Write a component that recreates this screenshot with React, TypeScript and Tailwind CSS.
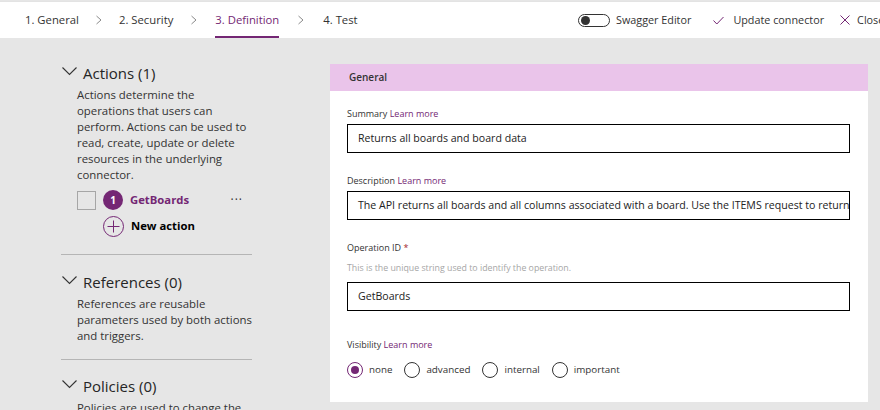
import React from "react";

const font = { fontFamily: '"Open Sans", "Noto Sans", sans-serif' };

function Chevron() {
  return (
    <svg width="6" height="10" viewBox="0 0 6 10" className="text-[#8a8a8a]">
      <path d="M0.5 1 L5 5 L0.5 9" fill="none" stroke="currentColor" strokeWidth="1" />
    </svg>
  );
}

function Down() {
  return (
    <svg width="15" height="9" viewBox="0 0 15 9" className="text-[#333]">
      <path d="M0.5 0.5 L7.5 7.5 L14.5 0.5" fill="none" stroke="currentColor" strokeWidth="1.1" />
    </svg>
  );
}

function Section({ title, children, last }: { title: string; children: React.ReactNode; last?: boolean }) {
  return (
    <div className={last ? "" : "border-b border-[#b5b5b5]"}>
      <div className="flex items-center h-[20px]">
        <span className="ml-[1px] mr-[6px] mt-[-4px]"><Down /></span>
        <span className="text-[15px] text-[#252525] leading-[20px]">{title}</span>
      </div>
      <div className="pl-[16px]">{children}</div>
    </div>
  );
}

function Label({ text, link, star }: { text: string; link?: boolean; star?: boolean }) {
  return (
    <div className="text-[9px] leading-[14px] text-[#333]">
      {text}
      {link && <span className="text-[#742774]"> Learn more</span>}
      {star && <span className="text-[#a4262c]"> *</span>}
    </div>
  );
}

function Input({ value }: { value: string }) {
  return (
    <div className="h-[29px] border-[1.5px] border-black flex items-center px-[10px] overflow-hidden whitespace-nowrap text-[10.6px] text-[#222]">
      {value}
    </div>
  );
}

function Radio({ label, checked }: { label: string; checked?: boolean }) {
  return (
    <div className="flex items-center gap-[6px]">
      <div className={`w-[16px] h-[16px] rounded-full border ${checked ? "border-[#742774]" : "border-[#333]"} flex items-center justify-center`}>
        {checked && <div className="w-[8px] h-[8px] rounded-full bg-[#742774]" />}
      </div>
      <span className="text-[9.8px] text-[#333]">{label}</span>
    </div>
  );
}

const desc = "text-[11.4px] leading-[16px] text-[#333] mt-[4px] whitespace-nowrap";

export default function App() {
  return (
    <div style={font} className="w-[880px] h-[410px] overflow-hidden bg-[#e6e6e6] flex flex-col">
      {/* top bar */}
      <div className="h-[37px] bg-white border-t border-[#e3e3e3] mt-[1px] flex items-stretch text-[#333] shrink-0">
        <div className="flex items-center pl-[25px] text-[11.3px]">
          <span>1. General</span>
          <span className="mx-[17px] flex"><Chevron /></span>
          <span>2. Security</span>
          <span className="mx-[18px] flex"><Chevron /></span>
          <div className="relative h-full flex items-center text-[#742774]">
            <span>3. Definition</span>
            <div className="absolute left-0 right-0 bottom-0 h-[2px] bg-[#742774]" />
          </div>
          <span className="mx-[19px] flex"><Chevron /></span>
          <span>4. Test</span>
        </div>
        <div className="flex-1" />
        <div className="flex items-center whitespace-nowrap text-[10.8px] w-[302px] shrink-0 overflow-hidden">
          <div className="w-[32px] h-[13px] rounded-full border border-[#333] flex items-center px-[2px] mr-[6px] shrink-0">
            <div className="w-[9px] h-[9px] rounded-full bg-[#333]" />
          </div>
          <span>Swagger Editor</span>
          <svg width="11" height="9" viewBox="0 0 11 9" className="ml-[22px] mr-[9px] text-[#742774] shrink-0">
            <path d="M0.5 4.5 L3.8 8 L10.5 1" fill="none" stroke="currentColor" strokeWidth="1" />
          </svg>
          <span>Update connector</span>
          <svg width="10" height="10" viewBox="0 0 10 10" className="ml-[16px] mr-[7px] text-[#742774] shrink-0">
            <path d="M0.5 0.5 L9.5 9.5 M9.5 0.5 L0.5 9.5" fill="none" stroke="currentColor" strokeWidth="1" />
          </svg>
          <span>Close</span>
        </div>
      </div>

      <div className="flex flex-1 min-h-0">
        {/* left */}
        <div className="w-[191px] ml-[61px] pt-[25px] flex flex-col shrink-0">
          <Section title="Actions (1)">
            <p className={desc}>
              Actions determine the<br />operations that users can<br />perform. Actions can be used to<br />read, create, update or delete<br />resources in the underlying<br />connector.
            </p>
            <div className="flex items-center mt-[7px] h-[20px]">
              <div className="w-[19px] h-[19px] border border-[#a6a6a6]" />
              <div className="ml-[7px] w-[20px] h-[20px] rounded-full bg-[#742774] text-white text-[10px] font-bold flex items-center justify-center">1</div>
              <span className="ml-[7px] text-[11.3px] font-bold text-[#742774]">GetBoards</span>
              <span className="ml-auto mr-[9px] text-[12px] text-[#333] tracking-[1px] leading-[10px]">···</span>
            </div>
            <div className="flex items-center mt-[6px] ml-[26px] h-[21px] mb-[17px]">
              <svg width="21" height="21" viewBox="0 0 21 21" className="text-[#742774]">
                <circle cx="10.5" cy="10.5" r="10" fill="none" stroke="currentColor" strokeWidth="1" />
                <path d="M10.5 4.5 V16.5 M4.5 10.5 H16.5" stroke="currentColor" strokeWidth="1" />
              </svg>
              <span className="ml-[7px] text-[11.3px] font-bold text-black">New action</span>
            </div>
          </Section>
          <div className="pt-[17px]">
            <Section title="References (0)">
              <p className={desc + " mb-[15px]"}>
                References are reusable<br />parameters used by both actions<br />and triggers.
              </p>
            </Section>
          </div>
          <div className="pt-[16px]">
            <Section title="Policies (0)" last>
              <p className={desc}>
                Policies are used to change the<br />behavior of actions and triggers.
              </p>
            </Section>
          </div>
        </div>

        {/* right */}
        <div className="ml-[78px] mt-[26px] mb-[8px] w-[538px] shrink-0 overflow-hidden bg-white flex flex-col">
          <div className="h-[27px] bg-[#eac4ea] flex items-center pl-[19px] text-[10px] font-semibold text-[#333] shrink-0">General</div>
          <div className="pl-[17px] pr-[18px] pt-[16px]">
            <Label text="Summary" link />
            <div className="mt-[3px]"><Input value="Returns all boards and board data" /></div>
            <div className="mt-[21px]"><Label text="Description" link /></div>
            <div className="mt-[3px]"><Input value="The API returns all boards and all columns associated with a board. Use the ITEMS request to return the items in each board." /></div>
            <div className="mt-[21px]"><Label text="Operation ID" star /></div>
            <div className="mt-[6px] text-[8.8px] leading-[14px] text-[#a6a6a6]">This is the unique string used to identify the operation.</div>
            <div className="mt-[7px]"><Input value="GetBoards" /></div>
            <div className="mt-[27px]"><Label text="Visibility" link /></div>
            <div className="mt-[10px] flex items-center gap-[12px]">
              <Radio label="none" checked />
              <Radio label="advanced" />
              <Radio label="internal" />
              <Radio label="important" />
            </div>
          </div>
        </div>
      </div>
    </div>
  );
}
